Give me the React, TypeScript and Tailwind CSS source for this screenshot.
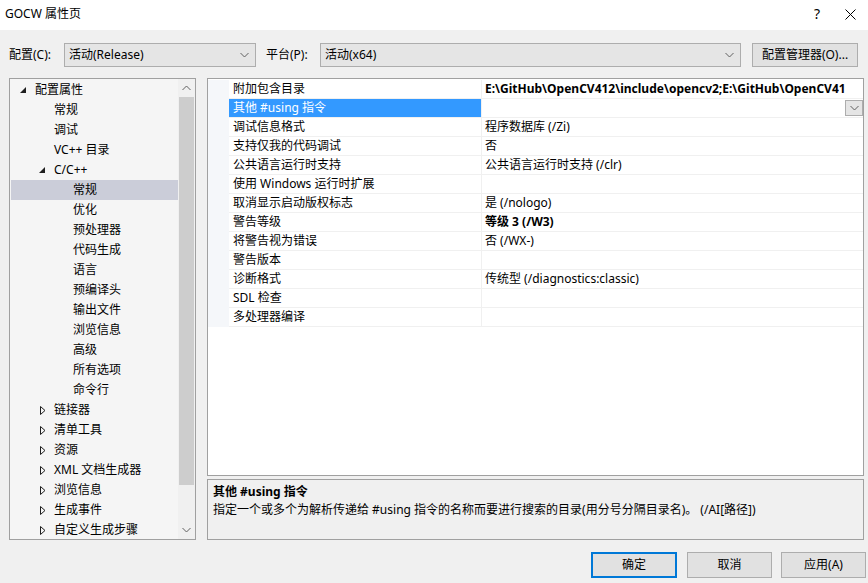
import React from 'react';

type TreeItem = {
    label: string;
    level: number;
    icon?: 'open' | 'closed';
    selected?: boolean;
};

const treeItems: TreeItem[] = [
    { label: '配置属性', level: 0, icon: 'open' },
    { label: '常规', level: 1 },
    { label: '调试', level: 1 },
    { label: 'VC++ 目录', level: 1 },
    { label: 'C/C++', level: 1, icon: 'open' },
    { label: '常规', level: 2, selected: true },
    { label: '优化', level: 2 },
    { label: '预处理器', level: 2 },
    { label: '代码生成', level: 2 },
    { label: '语言', level: 2 },
    { label: '预编译头', level: 2 },
    { label: '输出文件', level: 2 },
    { label: '浏览信息', level: 2 },
    { label: '高级', level: 2 },
    { label: '所有选项', level: 2 },
    { label: '命令行', level: 2 },
    { label: '链接器', level: 1, icon: 'closed' },
    { label: '清单工具', level: 1, icon: 'closed' },
    { label: '资源', level: 1, icon: 'closed' },
    { label: 'XML 文档生成器', level: 1, icon: 'closed' },
    { label: '浏览信息', level: 1, icon: 'closed' },
    { label: '生成事件', level: 1, icon: 'closed' },
    { label: '自定义生成步骤', level: 1, icon: 'closed' },
];

type Prop = {
    name: string;
    value: string;
    bold?: boolean;
    selected?: boolean;
};

const props: Prop[] = [
    { name: '附加包含目录', value: 'E:\\GitHub\\OpenCV412\\include\\opencv2;E:\\GitHub\\OpenCV41', bold: true },
    { name: '其他 #using 指令', value: '', selected: true },
    { name: '调试信息格式', value: '程序数据库 (/Zi)' },
    { name: '支持仅我的代码调试', value: '否' },
    { name: '公共语言运行时支持', value: '公共语言运行时支持 (/clr)' },
    { name: '使用 Windows 运行时扩展', value: '' },
    { name: '取消显示启动版权标志', value: '是 (/nologo)' },
    { name: '警告等级', value: '等级 3 (/W3)', bold: true },
    { name: '将警告视为错误', value: '否 (/WX-)' },
    { name: '警告版本', value: '' },
    { name: '诊断格式', value: '传统型 (/diagnostics:classic)' },
    { name: 'SDL 检查', value: '' },
    { name: '多处理器编译', value: '' },
];

function Chevron({ up = false }: { up?: boolean }) {
    return (
        <svg width="9" height="6" viewBox="0 0 9 6" className="shrink-0">
            <polyline
                points={up ? '0.5,5 4.5,1 8.5,5' : '0.5,1 4.5,5 8.5,1'}
                fill="none"
                stroke="#606060"
                strokeWidth="1"
            />
        </svg>
    );
}

function TreeIcon({ kind }: { kind: 'open' | 'closed' }) {
    if (kind === 'open') {
        return (
            <svg width="6" height="6" viewBox="0 0 6 6">
                <polygon points="6,0 6,6 0,6" fill="#1e1e1e" />
            </svg>
        );
    }
    return (
        <svg width="6" height="9" viewBox="0 0 6 9" className="ml-[1px]">
            <polygon points="0.5,0.5 5,4.5 0.5,8.5" fill="none" stroke="#1e1e1e" strokeWidth="1" />
        </svg>
    );
}

function Combo({ text, width }: { text: string; width: string }) {
    return (
        <div className={`${width} h-[24px] border border-[#adadad] bg-[#e5e5e5] flex items-center pl-[4px] pr-[6px]`}>
            <span className="flex-1">{text}</span>
            <Chevron />
        </div>
    );
}

function Button({ text, primary = false }: { text: string; primary?: boolean }) {
    return (
        <button
            className={`h-[26px] bg-[#e1e1e1] flex items-center justify-center ${primary ? 'w-[86px] border-2 border-[#0078d7]' : 'w-[85px] border border-[#adadad]'}`}
        >
            {text}
        </button>
    );
}

export default function App() {
    return (
        <div className="w-[868px] h-[583px] bg-[#f0f0f0] flex flex-col text-[12px] text-black font-['Segoe_UI','Noto_Sans','Noto_Sans_CJK_SC',sans-serif] overflow-hidden">
            {/* title bar */}
            <div className="h-[30px] bg-white flex items-center pl-[5px]">
                <span className="flex-1 pb-[2px]">GOCW 属性页</span>
                <span className="w-[30px] text-center text-[14px] mr-[3px] pb-[4px]">?</span>
                <div className="w-[30px] flex justify-center mr-[3px] pb-[2px]">
                    <svg width="11" height="11" viewBox="0 0 11 11">
                        <line x1="0.5" y1="0.5" x2="10.5" y2="10.5" stroke="#000" strokeWidth="1" />
                        <line x1="10.5" y1="0.5" x2="0.5" y2="10.5" stroke="#000" strokeWidth="1" />
                    </svg>
                </div>
            </div>

            {/* configuration row */}
            <div className="flex items-center mt-[13px] pl-[9px] h-[24px]">
                <span className="w-[55px]">配置(C):</span>
                <Combo text="活动(Release)" width="w-[192px]" />
                <span className="ml-[10px] w-[54px]">平台(P):</span>
                <Combo text="活动(x64)" width="w-[421px]" />
                <button className="ml-[11px] w-[106px] h-[24px] border border-[#adadad] bg-[#e1e1e1] flex items-center justify-center">
                    配置管理器(O)...
                </button>
            </div>

            {/* main */}
            <div className="flex mt-[11px] pl-[9px] h-[462px]">
                {/* tree */}
                <div className="w-[187px] h-full border border-[#a0a0a0] bg-[#f5f5f5] flex">
                    <div className="flex-1 pt-[1px] pl-[1px]">
                        {treeItems.map((item, i) => (
                            <div
                                key={i}
                                className={`h-[20px] flex items-center ${item.selected ? 'bg-[#cbcdd9]' : ''}`}
                                style={{ paddingLeft: 9 + item.level * 19 }}
                            >
                                <span className="w-[15px] flex items-center">
                                    {item.icon && <TreeIcon kind={item.icon} />}
                                </span>
                                <span>{item.label}</span>
                            </div>
                        ))}
                    </div>
                    <div className="w-[17px] flex flex-col bg-[#f0f0f0]">
                        <div className="h-[18px] flex items-center justify-center">
                            <Chevron up />
                        </div>
                        <div className="h-[388px] bg-[#cdcdcd] mx-[1px]" />
                        <div className="flex-1 flex items-end justify-center pb-[6px]">
                            <Chevron />
                        </div>
                    </div>
                </div>

                {/* right side */}
                <div className="ml-[11px] w-[657px] flex flex-col">
                    <div className="h-[399px] border border-[#a0a0a0] bg-white pt-[1px]">
                        {props.map((p, i) => (
                            <div key={i} className="h-[19px] flex">
                                <div className="w-[21px] bg-[#f5f7fa]" />
                                <div
                                    className={`w-[253px] border-r border-b border-[#f0f0f0] pl-[4px] flex items-center whitespace-nowrap ${p.selected ? 'bg-[#3399ff] text-white' : ''}`}
                                >
                                    {p.name}
                                </div>
                                <div className={`flex-1 min-w-0 border-b border-[#f0f0f0] pl-[3px] flex items-center whitespace-nowrap overflow-hidden ${p.bold ? 'font-bold' : ''}`}>
                                    {p.selected ? (
                                        <div className="flex-1 flex justify-end">
                                            <div className="w-[18px] h-[16px] border border-[#adadad] bg-[#e5e5e5] flex items-center justify-center">
                                                <Chevron />
                                            </div>
                                        </div>
                                    ) : (
                                        p.value
                                    )}
                                </div>
                            </div>
                        ))}
                    </div>
                    <div className="mt-[3px] h-[61px] border border-[#a0a0a0] bg-[#f0f0f0] pl-[5px] pt-[3px]">
                        <div className="font-bold leading-[18px]">其他 #using 指令</div>
                        <div className="leading-[18px]">指定一个或多个为解析传递给 #using 指令的名称而要进行搜索的目录(用分号分隔目录名)。 (/AI[路径])</div>
                    </div>
                </div>
            </div>

            {/* buttons */}
            <div className="flex justify-end mt-[12px] pr-[2px]">
                <Button text="确定" primary />
                <div className="w-[10px]" />
                <Button text="取消" />
                <div className="w-[9px]" />
                <Button text="应用(A)" />
            </div>
        </div>
    );
}
